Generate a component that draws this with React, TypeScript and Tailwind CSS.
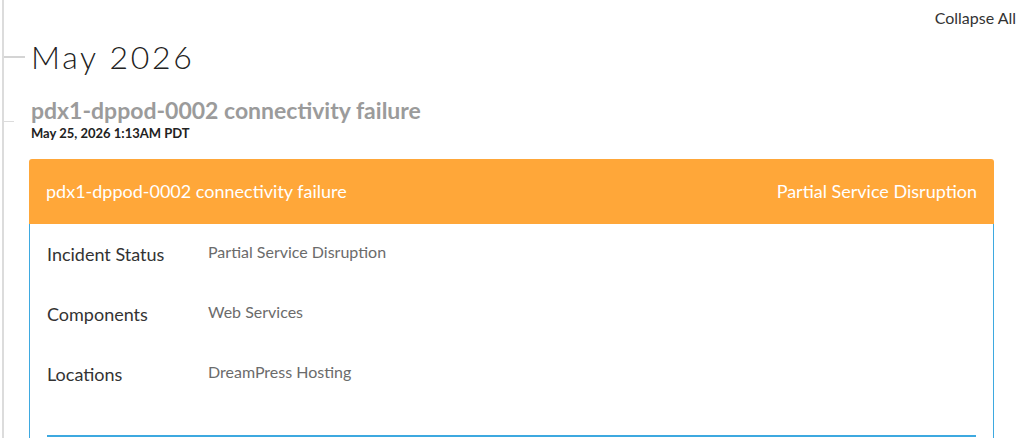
const rows = [
  { label: "Incident Status", value: "Partial Service Disruption" },
  { label: "Components", value: "Web Services" },
  { label: "Locations", value: "DreamPress Hosting" },
];

const App = () => {
  return (
    <div className="min-h-screen bg-white pl-[2px] font-['Lato','Liberation_Sans',sans-serif]">
      <div className="min-h-[438px] border-l-2 border-[#dcdcdc]">
        <div className="flex justify-end pr-[8px] pt-[9px] text-[16px] leading-[18px] text-[#333]">Collapse All</div>

        <div className="mt-[11px] flex items-center">
          <span className="h-[2px] w-[21px] bg-[#d4d4d4]" />
          <h2 className="ml-[6px] text-[32px] font-light leading-[38px] tracking-[2.7px] text-[#222]">May 2026</h2>
        </div>

        <div className="mt-[21px] flex">
          <div className="flex w-[27px] flex-col">
            <span className="mt-[24px] h-[1px] w-[10px] bg-[#dcdcdc]" />
          </div>
          <div>
            <h3 className="text-[23px] font-bold leading-[26px] text-[#9b9b9b]">pdx1-dppod-0002 connectivity failure</h3>
            <p className="mt-[3px] text-[13px] font-bold leading-[14px] text-[#222]">May 25, 2026 1:13AM PDT</p>
          </div>
        </div>

        <article className="ml-[25px] mr-[30px] mt-[19px]">
          <div className="flex h-[65px] items-center justify-between rounded-t-[3px] bg-[#ffa739] px-[17px] text-[18px] text-white">
            <span>pdx1-dppod-0002 connectivity failure</span>
            <span>Partial Service Disruption</span>
          </div>
          <div className="border-x border-[#3ea9e0] px-[17px]">
            {rows.map((row) => (
              <div className="grid h-[60px] grid-cols-[161px_1fr] items-center" key={row.label}>
                <span className="text-[18px] text-[#333]">{row.label}</span>
                <span className="pb-[5px] text-[16px] text-[#6b6b6b]">{row.value}</span>
              </div>
            ))}
            <div className="h-[31px]" />
            <div className="h-[2px] bg-[#3ea9e0]" />
            <div className="h-[20px]" />
          </div>
        </article>
      </div>
    </div>
  );
};

export default App;
